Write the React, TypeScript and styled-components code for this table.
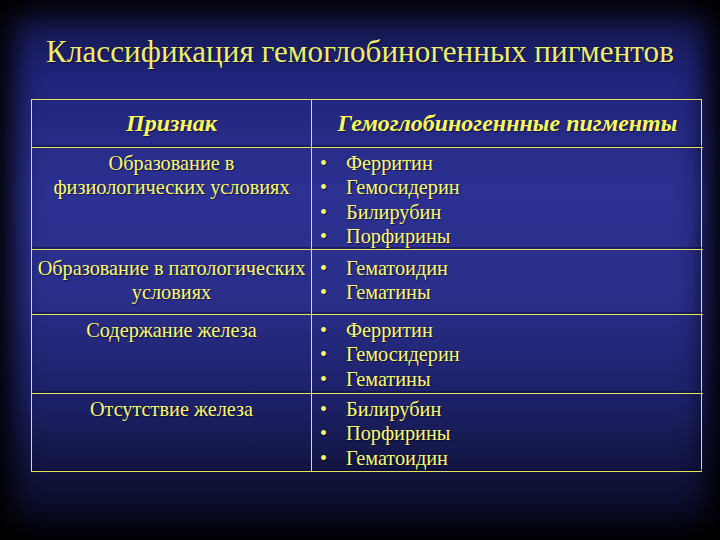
import React from 'react';
import styled, { createGlobalStyle } from 'styled-components';

const GlobalStyle = createGlobalStyle`
  html, body {
    margin: 0;
    padding: 0;
    background: #000;
  }
`;

const Slide = styled.div`
  width: 720px;
  height: 540px;
  box-sizing: border-box;
  padding-top: 32px;
  overflow: hidden;
  font-family: 'Liberation Serif', 'Times New Roman', serif;
  color: #fafa6c;
  text-shadow: 1px 1px 1px rgba(0, 0, 20, 0.55);
  background: linear-gradient(
    to bottom,
    #11143e 0%,
    #20247a 14%,
    #2c3192 35%,
    #2a2e8a 55%,
    #1c2066 75%,
    #0d1030 92%,
    #05061a 100%
  );
  box-shadow: inset 0 0 28px 14px #000;
`;

const Title = styled.h1`
  margin: 0;
  height: 40px;
  text-align: center;
  font-weight: normal;
  font-size: 31.2px;
  line-height: 40px;
  color: #eeee6c;
`;

const Table = styled.div`
  margin: 27px 0 0 31px;
  width: 671px;
  display: grid;
  grid-template-columns: 280px 391px;
  border: 1px solid #e6e65c;
  box-sizing: border-box;
`;

const Cell = styled.div<{ $h: number; $pad?: number; $last?: boolean }>`
  height: ${(p) => p.$h}px;
  box-sizing: border-box;
  padding-top: ${(p) => p.$pad ?? 3}px;
  border-bottom: ${(p) => (p.$last ? 'none' : '1px solid #e6e65c')};
  box-shadow: inset 0 -2px 0 rgba(10, 12, 50, 0.45);
`;

const LabelCell = styled(Cell)`
  border-right: 1px solid #e6e65c;
  text-align: center;
  font-size: 20.3px;
  line-height: 24.3px;
  white-space: nowrap;
`;

const HeadCell = styled(Cell)<{ $divider?: boolean }>`
  border-right: ${(p) => (p.$divider ? '1px solid #e6e65c' : 'none')};
  display: flex;
  align-items: center;
  justify-content: center;
  padding-top: 0;
  font-size: 24px;
  font-weight: bold;
  font-style: italic;
  white-space: nowrap;
  color: #fafa5a;
`;

const List = styled.ul`
  margin: 0;
  padding: 0 0 0 8px;
  list-style: none;
  font-size: 20.3px;
  line-height: 24.3px;
`;

const Item = styled.li`
  display: flex;
  white-space: nowrap;
`;

const Bullet = styled.span`
  width: 26px;
  flex: none;
  font-size: 20px;
`;

type Row = { label: string[]; items: string[]; h: number; pad?: number };

const rows: Row[] = [
  {
    label: ['Образование в', 'физиологических условиях'],
    items: ['Ферритин', 'Гемосидерин', 'Билирубин', 'Порфирины'],
    h: 102,
  },
  {
    label: ['Образование в патологических', 'условиях'],
    items: ['Гематоидин', 'Гематины'],
    h: 65,
    pad: 6,
  },
  {
    label: ['Содержание железа'],
    items: ['Ферритин', 'Гемосидерин', 'Гематины'],
    h: 79,
  },
  {
    label: ['Отсутствие железа'],
    items: ['Билирубин', 'Порфирины', 'Гематоидин'],
    h: 77,
  },
];

export default function App() {
  return (
    <>
      <GlobalStyle />
      <Slide>
        <Title>Классификация гемоглобиногенных пигментов</Title>
        <Table>
          <HeadCell $h={48} $divider>Признак</HeadCell>
          <HeadCell $h={48}>Гемоглобиногеннные пигменты</HeadCell>
          {rows.map((row, i) => {
            const last = i === rows.length - 1;
            return (
              <React.Fragment key={i}>
                <LabelCell $h={row.h} $pad={row.pad} $last={last}>
                  {row.label.map((l, j) => (
                    <div key={j}>{l}</div>
                  ))}
                </LabelCell>
                <Cell $h={row.h} $pad={row.pad} $last={last}>
                  <List>
                    {row.items.map((it) => (
                      <Item key={it}>
                        <Bullet>•</Bullet>
                        {it}
                      </Item>
                    ))}
                  </List>
                </Cell>
              </React.Fragment>
            );
          })}
        </Table>
      </Slide>
    </>
  );
}
